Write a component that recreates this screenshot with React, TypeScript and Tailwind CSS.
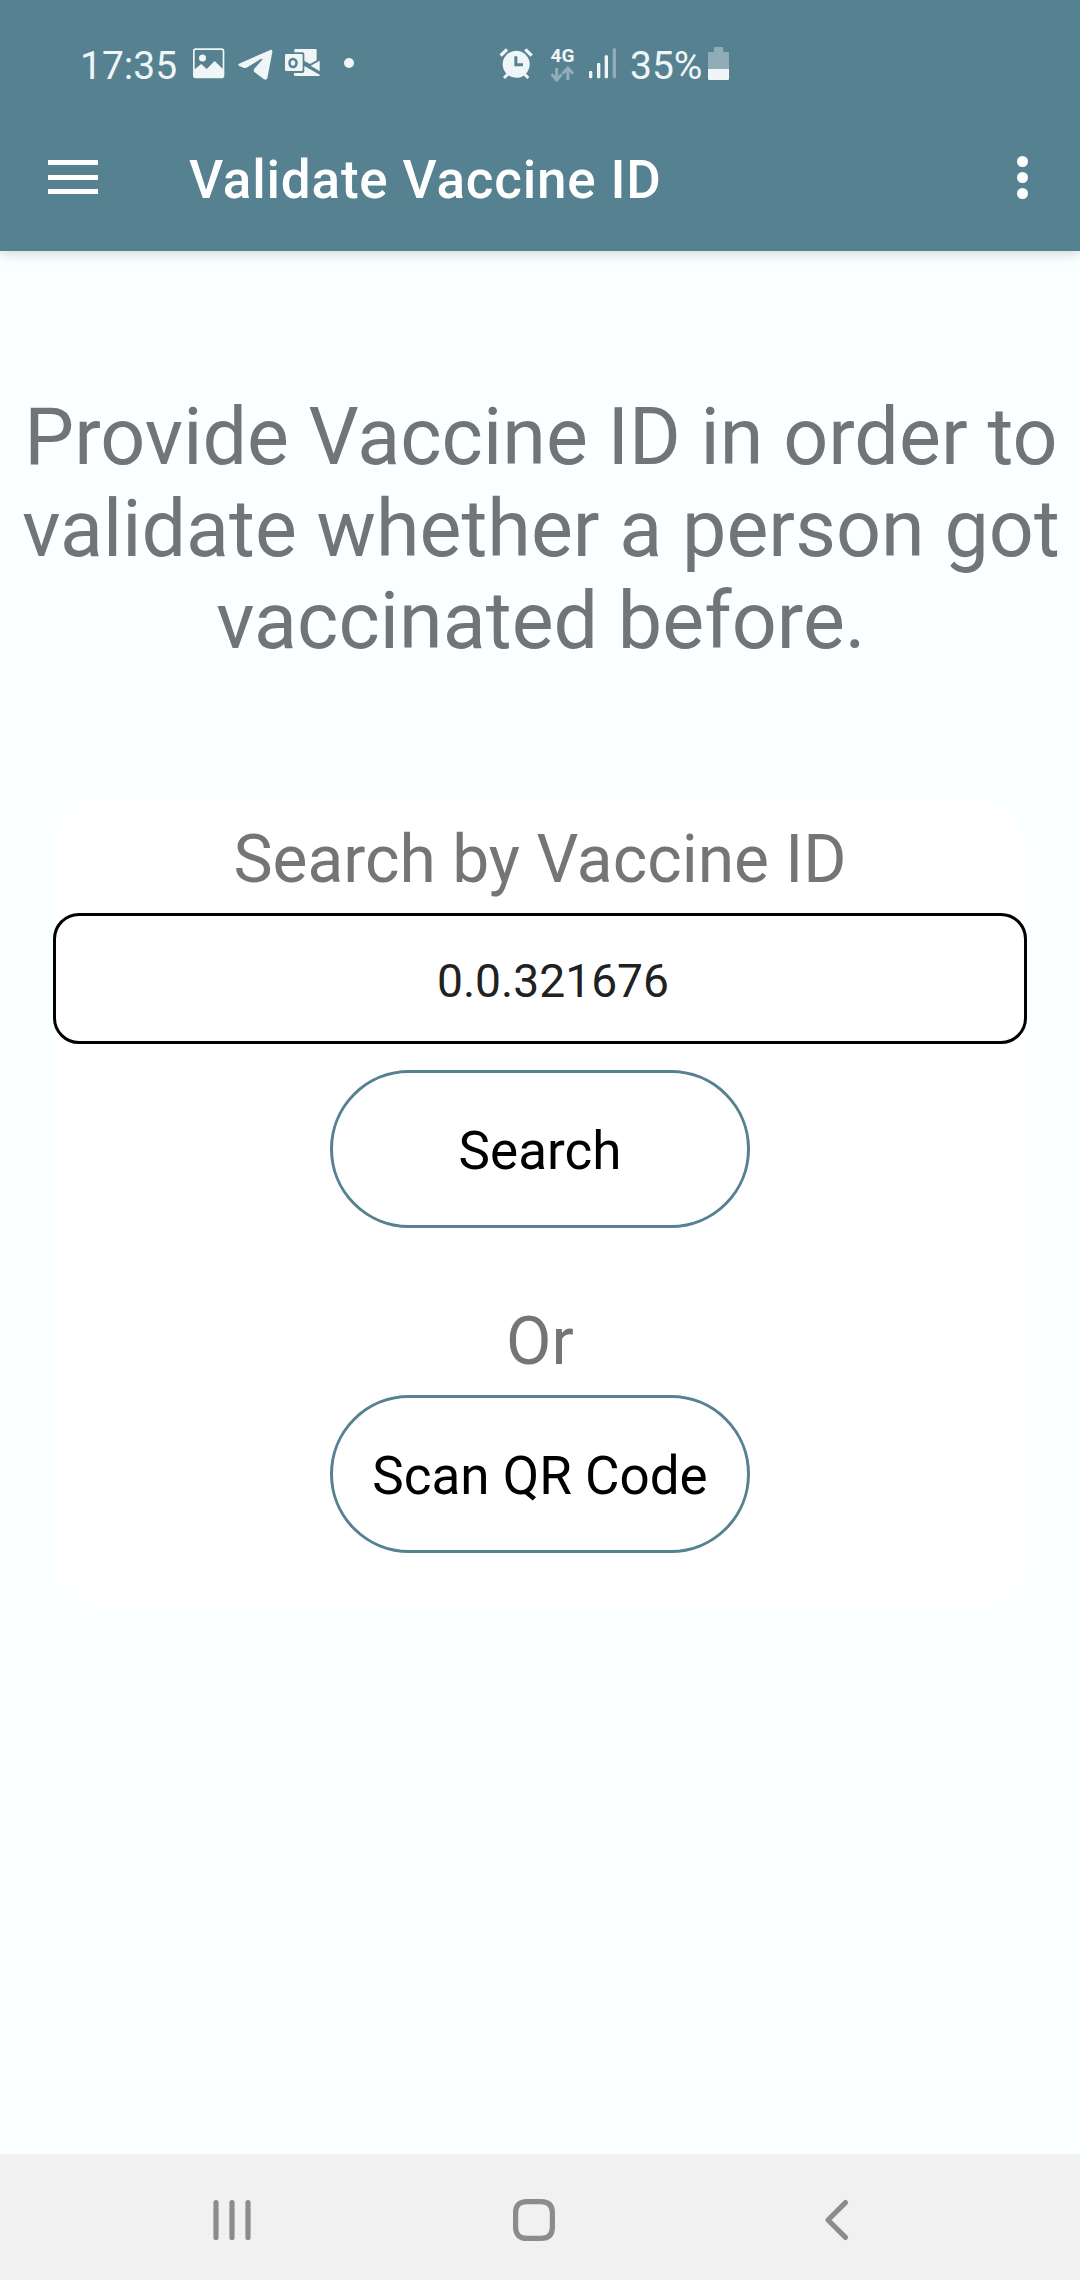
import type { ReactNode } from 'react';

function ImageIcon() {
  return (
    <svg className="ml-3.5 h-[46px] w-[35px] shrink-0" viewBox="393 39 105 138" fill="#f0f5f7">
      <rect x="401.5" y="57.5" width="89" height="85" rx="6" fill="none" stroke="#f0f5f7" strokeWidth="5" />
      <circle cx="427.500" cy="84" r="10.500" />
      <path d="M401 120 L424 102 L440 117 L464 93 L491 119 V141 H401 Z" />
    </svg>
  );
}

function TelegramIcon() {
  return (
    <svg className="ml-2.5 h-[46px] w-[39px] shrink-0" viewBox="528 39 117 138" fill="#f0f5f7">
      <path d="M537 101 L631 60 Q638 58 637 66 L622 145 Q619 152 612 148 L584 127 Q578 122 584 115 L608 88 Q607 84 601 88 L562 112 Q557 115 550 113 L538 108 Q532 105 537 101 Z" />
    </svg>
  );
}

function OutlookIcon() {
  return (
    <svg className="ml-2 h-[46px] w-[39px] shrink-0" viewBox="669 39 117 138" fill="#f0f5f7">
      <rect x="675" y="72" width="53" height="51" rx="4" />
      <ellipse cx="699" cy="99" rx="10.500" ry="12" fill="none" stroke="#558190" strokeWidth="7.500" />
      <path d="M705 57 H767 Q770 57 770 60 V91 L750 102 L733 93 V73 Q733 67 727 67 H703 V59 Q703 57 705 57 Z" />
      <path d="M779 92 V124 L752 107 Z" />
      <path d="M733 108 L779 134 V138 H705 Q702 138 702 135 V129 H727 Q733 129 733 123 Z" />
    </svg>
  );
}

function AlarmIcon() {
  return (
    <svg className="ml-[143px] h-[46px] w-[39px] shrink-0" viewBox="51 39 117 138" fill="none" stroke="#f0f5f7">
      <circle cx="108.500" cy="103" r="40.500" fill="#f0f5f7" stroke="none" />
      <path d="M62 77 L81 58 M136 58 L155 77" strokeWidth="10" />
      <path d="M72 144 L84 132 M133 132 L145 144" strokeWidth="9" />
      <path d="M107.500 79 V104.500 H129" stroke="#558190" strokeWidth="9" />
    </svg>
  );
}

function NetworkIndicator() {
  return (
    <div className="ml-3 flex h-[46px] w-[29px] shrink-0 flex-col items-center pt-[5px]">
      <span className="text-[19px] leading-4 font-bold">4G</span>
      <svg className="mt-0.5 h-[17px] w-[29px]" viewBox="204 105 87 51" fill="none" stroke="#91afb9" strokeWidth="9">
        <path d="M230 111 V146 M215 130 L230 147 L245 130" />
        <path d="M263.500 147 V112 M248 128 L263.500 111 L279 128" />
      </svg>
    </div>
  );
}

function SignalIcon() {
  return (
    <svg className="ml-2.5 h-[46px] w-[31px] shrink-0" viewBox="321 39 93 138" fill="#f0f5f7">
      <rect x="327" y="123" width="10" height="22" rx="3" />
      <rect x="351" y="99" width="10" height="46" rx="3" />
      <rect x="374" y="76" width="10" height="69" rx="3" />
      <rect x="398" y="55" width="10" height="90" rx="3" fill="#8facb7" />
    </svg>
  );
}

function BatteryIcon() {
  return (
    <svg className="ml-1 h-[46px] w-[25px] shrink-0" viewBox="678 39 75 138">
      <path d="M702 66 V54 Q702 51 705 51 H727 Q730 51 730 54 V66 H743 Q747 66 747 70 V118 H684 V70 Q684 66 688 66 Z" fill="#8facb7" />
      <path d="M684 117 H747 V146 Q747 150 743 150 H688 Q684 150 684 146 Z" fill="#f0f5f7" />
    </svg>
  );
}

function StatusBar() {
  return (
    <div className="flex h-[89px] items-start pt-[43px] pl-20 text-[39px] leading-[46px] text-[#f0f5f7]">
      <span className="w-[97px] shrink-0">17:35</span>
      <ImageIcon />
      <TelegramIcon />
      <OutlookIcon />
      <span className="mt-[15px] ml-[22px] size-2.5 shrink-0 rounded-full bg-[#f0f5f7]" />
      <AlarmIcon />
      <NetworkIndicator />
      <SignalIcon />
      <span className="ml-3 w-[72px] shrink-0">35%</span>
      <BatteryIcon />
    </div>
  );
}

function AppBar() {
  return (
    <header className="relative h-[251px] bg-[#558190] shadow-[0_2px_12px_rgba(0,0,0,0.18)]">
      <StatusBar />
      <div className="mt-[60px] flex h-[62px] pl-12">
        <button aria-label="Open menu" className="mt-[11px] flex h-[34px] w-[50px] flex-col justify-between">
          <span className="h-[5px] w-full bg-white" />
          <span className="h-[5px] w-full bg-white" />
          <span className="h-[5px] w-full bg-white" />
        </button>
        <h1 className="ml-[91px] flex-1 text-[53px] leading-[62px] font-medium tracking-[0.81px] text-white">Validate Vaccine ID</h1>
        <button aria-label="More options" className="mt-[7px] mr-[52.5px] flex h-[43px] flex-col justify-between">
          <span className="size-[11px] rounded-full bg-white" />
          <span className="size-[11px] rounded-full bg-white" />
          <span className="size-[11px] rounded-full bg-white" />
        </button>
      </div>
    </header>
  );
}

function PillButton({ children }: { children: ReactNode }) {
  return (
    <button className="flex h-[158px] w-[420px] items-center justify-center rounded-full border-3 border-[#558190] pt-1 text-[53px] leading-[62px] text-black">
      {children}
    </button>
  );
}

function NavigationBar() {
  return (
    <nav className="flex h-[126px] items-start bg-[#f1f1f1] pt-11 pl-[212px]">
      <svg className="h-11 w-10" viewBox="0 0 40 44" fill="none" stroke="#8c8c8c" strokeWidth="5.200" strokeLinecap="round">
        <path d="M4 4.600 V39.400 M20 4.600 V39.400 M36 4.600 V39.400" />
      </svg>
      <svg className="ml-[260px] h-11 w-11" viewBox="0 0 44 44" fill="none" stroke="#8c8c8c" strokeWidth="5.200">
        <path d="M15 3.600 H29 Q40.400 3.600 40.400 15 V29 Q40.400 40.400 29 40.400 H15 Q3.600 40.400 3.600 29 V15 Q3.600 3.600 15 3.600 Z" />
      </svg>
      <svg className="ml-[266px] h-11 w-[30px]" viewBox="0 0 30 44" fill="none" stroke="#8c8c8c" strokeWidth="5.200" strokeLinecap="round" strokeLinejoin="round">
        <path d="M23.500 4.600 L6 22 L23.500 39.400" />
      </svg>
    </nav>
  );
}

export default function App() {
  return (
    <div className="flex h-[2280px] w-[1080px] flex-col overflow-hidden bg-[#faffff] font-['Roboto',sans-serif]">
      <AppBar />
      <main className="flex flex-1 flex-col items-center pt-[140px]">
        <p className="pl-0.5 text-center text-[79px] leading-[92px] tracking-[0.05px] whitespace-nowrap text-[#727575]">
          Provide Vaccine ID in order to
          <br />
          validate whether a person got
          <br />
          vaccinated before.
        </p>
        <section className="mt-[132px] flex h-[808px] w-[974px] flex-col items-center rounded-[53px] bg-white pt-[22px]">
          <h2 className="text-[65.9px] leading-[77px] text-[#757575]">Search by Vaccine ID</h2>
          <input
            aria-label="Vaccine ID"
            defaultValue="0.0.321676"
            className="mt-[15px] h-[131px] w-full rounded-[26px] border-3 border-black pt-[5px] pl-[26px] text-center text-[46.2px] text-[#212121] outline-none"
          />
          <div className="mt-[26px]">
            <PillButton>Search</PillButton>
          </div>
          <p className="mt-[75px] mb-[15px] text-[66px] leading-[77px] text-[#757575]">Or</p>
          <PillButton>Scan QR Code</PillButton>
        </section>
      </main>
      <NavigationBar />
    </div>
  );
}
